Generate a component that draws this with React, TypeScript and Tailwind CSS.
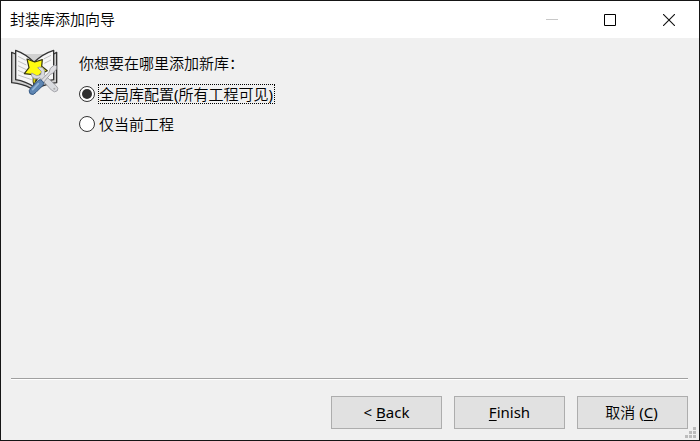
import { useState } from 'react';
import type { ReactNode } from 'react';

function LibraryIcon() {
  return (
    <svg viewBox="0 0 180 180" className="size-[60px] shrink-0" aria-hidden="true">
      <path d="M32 36 L20 31 L20 122 Q53 125 78 139 L88 136 L98 139 Q123 125 155 122 L155 31 L146 36" fill="#d0d0d0" stroke="#333" strokeWidth="4" strokeLinejoin="round" />
      <path d="M32 25 L32 113 Q63 118 87 135 L87 61 Q63 36 32 25 Z" fill="#f6f6f6" stroke="#333" strokeWidth="4" strokeLinejoin="round" />
      <path d="M146 25 L146 113 Q112 118 87 135 L87 61 Q112 36 146 25 Z" fill="#f6f6f6" stroke="#333" strokeWidth="4" strokeLinejoin="round" />
      <path d="M39 43 L62 55 M39 57 L64 69 M39 71 L64 83 M39 85 L62 95 M39 99 L80 113 M116 51 L138 40 M118 64 L138 54" fill="none" stroke="#b4b4b4" strokeWidth="2.5" />
      <path d="M66 51 L89 60 L112 53 L110 73 L127 86 L106 96 L92 119 L84 98 L58 95 L72 77 Z" fill="#fffb10" stroke="#33330f" strokeWidth="3.5" strokeLinejoin="round" />
      <path d="M84 104 L95 104 L90 124 L84 122 Z" fill="#d8d319" stroke="#222" strokeWidth="2" />
      <path d="M80 93 Q76 104 87 109 Q97 113 105 107 L139 144 Q149 154 157 146 Q162 139 153 131 L118 98 Q122 84 112 77 Q104 73 98 77 L109 88 L107 98 L95 101 Z" fill="#d9dbdf" stroke="#96969c" strokeWidth="2.5" strokeLinejoin="round" />
      <circle cx="148" cy="140" r="3" fill="#aaa" />
      <path d="M108 115 L132 91 L136 79 L148 69 L155 72 L154 82 L143 94 L136 97 L115 122 Z" fill="#dedee2" stroke="#909096" strokeWidth="2.5" strokeLinejoin="round" />
      <path d="M101 114 Q107 110 113 118 Q120 124 113 131 L93 151 Q85 162 75 155 Q68 147 79 136 Z" fill="#5e86b2" stroke="#365a84" strokeWidth="3" />
      <path d="M100 125 L83 143" stroke="#91b4d8" strokeWidth="5" strokeLinecap="round" />
    </svg>
  );
}

function TitleBar() {
  return (
    <header className="flex h-[37px] shrink-0 items-center bg-white pl-[9px]">
      <h1 className="flex-1 pb-[2px] text-[15px] leading-[20px] font-[350]">封装库添加向导</h1>
      <div className="flex items-center">
        <button disabled aria-label="最小化" className="flex h-[37px] w-[58px] items-center justify-center">
          <svg width="12" height="12"><path d="M0 5.5H12" stroke="#c8c8c8" /></svg>
        </button>
        <button aria-label="最大化" className="flex h-[37px] w-[58px] items-center justify-center">
          <svg width="12" height="12"><path d="M.5 .5H11.5V11.5H.5Z" fill="none" stroke="#000" /></svg>
        </button>
        <button aria-label="关闭" className="flex h-[37px] w-[60px] items-center justify-center">
          <svg width="12" height="12"><path d="M0 0L12 12M12 0L0 12" stroke="#111" strokeWidth="1.1" /></svg>
        </button>
      </div>
    </header>
  );
}

type OptionProps = { checked: boolean; onSelect: () => void; children: ReactNode };

function Option({ checked, onSelect, children }: OptionProps) {
  return (
    <label className="flex h-5 items-center">
      <input type="radio" name="scope" checked={checked} onChange={onSelect} className="sr-only" />
      <span className="mr-[3px] flex size-4 items-center justify-center rounded-full border border-[#333] bg-white">
        {checked && <span className="size-[10px] rounded-full bg-[#303030]" />}
      </span>
      <span className={checked ? 'h-5 border border-dotted border-black pr-px leading-[18px]' : 'h-5 border border-transparent leading-[18px]'}>
        {children}
      </span>
    </label>
  );
}

function DialogButton({ children }: { children: ReactNode }) {
  return (
    <button className="flex h-[33px] w-[111px] items-center justify-center border border-[#adadad] bg-[#e1e1e1] pb-[2px] text-[15px] leading-5">
      <span>{children}</span>
    </button>
  );
}

function Mnemonic({ children }: { children: string }) {
  return <span className="underline decoration-1 underline-offset-2">{children}</span>;
}

export default function App() {
  const [global, setGlobal] = useState(true);
  return (
    <div className="relative flex h-[441px] w-[700px] flex-col border border-[#151515] bg-[#f0f0f0] font-['Noto_Sans','Noto_Sans_CJK_SC',sans-serif] text-[15px] text-black">
      <TitleBar />
      <main className="flex flex-1 pt-[4px] pl-[4px]">
        <LibraryIcon />
        <section className="pt-[11px] pl-[14px] font-[350]">
          <p className="mb-[11px] h-5 leading-5">你想要在哪里添加新库：</p>
          <div className="flex flex-col gap-[10px]">
            <Option checked={global} onSelect={() => setGlobal(true)}>
              全局库配置<span className="font-normal">(</span>所有工程可见<span className="font-normal">)</span>
            </Option>
            <Option checked={!global} onSelect={() => setGlobal(false)}>仅当前工程</Option>
          </div>
        </section>
      </main>
      <div className="mr-[11px] ml-[10px] h-[2px] shrink-0 border-t border-b border-t-[#a0a0a0] border-b-white" />
      <footer className="flex h-[60px] shrink-0 justify-end gap-3 pt-[16px] pr-[11px]">
        <DialogButton>&lt; <Mnemonic>B</Mnemonic>ack</DialogButton>
        <DialogButton><Mnemonic>F</Mnemonic>inish</DialogButton>
        <DialogButton><span className="mr-[2px]"><span className="font-[350]">取消</span> (<Mnemonic>C</Mnemonic>)</span></DialogButton>
      </footer>
      <svg className="absolute right-[3px] bottom-[2px]" width="11" height="11" fill="#bcbcbc" aria-hidden="true">
        <path d="M8 0h3v3h-3zM4 4h3v3h-3zM8 4h3v3h-3zM0 8h3v3h-3zM4 8h3v3h-3zM8 8h3v3h-3z" />
      </svg>
    </div>
  );
}
